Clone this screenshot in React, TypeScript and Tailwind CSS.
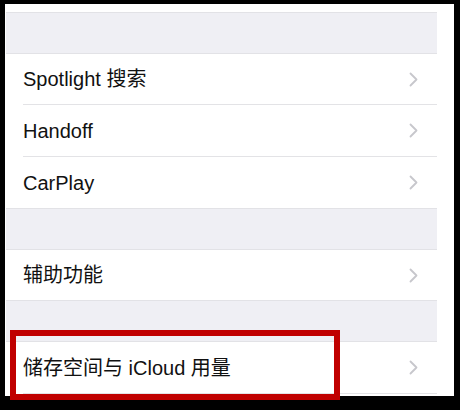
import React from "react";

type Row = { label: string; height: string; divider?: boolean };

const groups: Row[][] = [
  [
    { label: "Spotlight 搜索", height: "h-[50px]", divider: true },
    { label: "Handoff", height: "h-[51px]", divider: true },
    { label: "CarPlay", height: "h-[51px]" },
  ],
  [{ label: "辅助功能", height: "h-[50px]" }],
  [{ label: "储存空间与 iCloud 用量", height: "h-[51px]", divider: true }],
];

function Chevron() {
  return (
    <svg width="9" height="15" viewBox="0 0 9 15" fill="none" className="shrink-0">
      <path d="M1.5 1.5 L7.5 7.5 L1.5 13.5" stroke="#c7c7cc" strokeWidth="1.8" strokeLinecap="round" strokeLinejoin="round" />
    </svg>
  );
}

function SettingsRow({ row }: { row: Row }) {
  return (
    <div className="bg-white">
      <div className={`flex ${row.height} items-center justify-between pl-[17px] pr-[19px]`}>
        <span className="text-[20px] leading-none text-[#111]">{row.label}</span>
        <Chevron />
      </div>
      {row.divider && <div className="ml-[17px] h-px bg-[#e3e3e6]" />}
    </div>
  );
}

function Spacer() {
  return <div className="h-[42px] border-y border-[#e2e2e6] bg-[#efeff4]" />;
}

export default function App() {
  return (
    <div
      className="relative h-[410px] w-[460px] overflow-hidden bg-black pl-[5px] pt-[4px]"
      style={{ fontFamily: '"Liberation Sans", "Noto Sans CJK SC", sans-serif' }}
    >
      {/* screenshot panel */}
      <div className="h-[392px] w-[449px] overflow-hidden bg-white pl-px pr-[17px] pt-[8px]">
        <div className="w-[431px]">
          {groups.map((group, i) => (
            <div key={i}>
              <Spacer />
              {group.map((row) => (
                <SettingsRow key={row.label} row={row} />
              ))}
            </div>
          ))}
        </div>
      </div>

      {/* red highlight box */}
      <div className="absolute left-[10px] top-[330px] h-[70px] w-[330px] border-[6px] border-[#c00000]" />
    </div>
  );
}
